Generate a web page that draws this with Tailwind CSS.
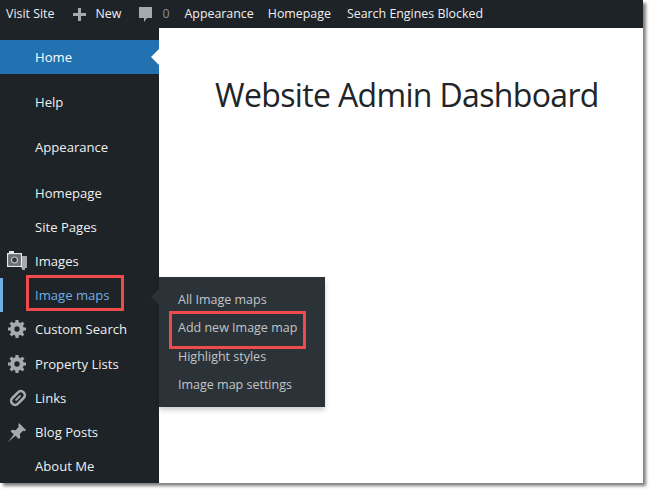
<!DOCTYPE html>
<html><head><meta charset="utf-8"><script src="https://cdn.jsdelivr.net/npm/@tailwindcss/browser@4"></script></head>
<body class="bg-white overflow-hidden font-['Open_Sans','Noto_Sans',sans-serif]">
<div class="relative w-[654px] h-[494px] overflow-hidden">
<div class="relative w-[643px] h-[483px] bg-white shadow-[3px_3px_3px_rgba(0,0,0,0.5)]">
<header class="h-[28px] bg-[#1d2327] text-[#f0f0f1] text-[12.400px] flex items-center">
<span class="ml-[6px]">Visit Site</span>
<svg class="ml-[18px] w-[15px] h-[15px]" viewBox="0 0 15 15" fill="#a7aaad"><path d="M6 1h3v5h5v3H9v5H6V9H1V6h5z"/></svg>
<span class="ml-[8px]">New</span>
<svg class="ml-[17px] w-[15px] h-[17px]" viewBox="0 0 15 17" fill="#a7aaad"><path d="M1 1h13v11H9l-3 4v-4H1z"/></svg>
<span class="ml-[9px] text-[#8c8f94]">0</span>
<span class="ml-[15px]">Appearance</span>
<span class="ml-[14px]">Homepage</span>
<span class="ml-[16px]">Search Engines Blocked</span>
</header>
<div class="flex h-[455px]">
<nav class="w-[159px] bg-[#1d2327] text-[#f0f0f1] text-[13.100px] pt-[12px]">
<div class="relative h-[34px] bg-[#2271b1] text-white pl-[35px] pt-[2px] flex items-center">Home<span class="absolute right-0 top-[9px] border-y-[8px] border-r-[8px] border-y-transparent border-r-white"></span></div>
<div class="h-[34px] mt-[11px] pl-[35px] pt-[2px] flex items-center">Help</div>
<div class="h-[34px] mt-[11px] pl-[35px] pt-[2px] flex items-center">Appearance</div>
<div class="h-[34px] mt-[12px] pl-[35px] pt-[2px] flex items-center">Homepage</div>
<div class="h-[34px] pl-[35px] pt-[2px] flex items-center">Site Pages</div>
<div class="relative h-[34px] pl-[35px] pt-[2px] flex items-center">
<svg class="absolute left-[6px] top-[7px] w-[22px] h-[21px]" viewBox="0 0 22 21"><path fill="#a7aaad" d="M16 5h5v12h-2v2h-3v-2h-1z"/><path fill="#e8e8e9" fill-rule="evenodd" d="M3 0h5v2h8v14H1V2h2zM2.500 3.500v11h12v-11z"/><rect x="2.500" y="3.500" width="12" height="11" fill="#6b6f73"/><circle cx="8.500" cy="9" r="3" fill="#33383c" stroke="#c3c4c7" stroke-width="1.200"/></svg>
Images</div>
<div class="relative h-[34px] border-l-[3px] border-[#72aee6] pl-[32px] pt-[2px] flex items-center text-[#72aee6]">Image maps</div>
<div class="relative h-[34px] pl-[35px] pt-[2px] flex items-center">
<svg class="absolute left-[8px] top-[8px] w-[18px] h-[18px]" viewBox="1 2 17 17" fill="#a7aaad"><path fill-rule="evenodd" d="M18 12h-2.180c-.17.7-.44 1.350-.81 1.930l1.540 1.540-2.100 2.100-1.540-1.540c-.58.360-1.230.640-1.910.810V19H8v-2.180c-.68-.170-1.330-.450-1.910-.810l-1.540 1.540-2.120-2.120 1.540-1.540c-.360-.580-.640-1.230-.810-1.910H1V9.030h2.170c.170-.700.440-1.350.810-1.930L2.430 5.550l2.100-2.100L6.080 5c.580-.370 1.230-.640 1.920-.820V2h3v2.180c.680.170 1.330.450 1.910.810l1.540-1.540 2.120 2.120-1.540 1.540c.360.580.640 1.230.810 1.910H18zM9.500 13a2.500 2.500 0 1 0 0-5 2.500 2.500 0 0 0 0 5z"/></svg>
Custom Search</div>
<div class="relative h-[34px] mt-[1px] pl-[35px] pt-[2px] flex items-center">
<svg class="absolute left-[8px] top-[8px] w-[18px] h-[18px]" viewBox="1 2 17 17" fill="#a7aaad"><path fill-rule="evenodd" d="M18 12h-2.180c-.17.7-.44 1.350-.81 1.930l1.540 1.540-2.100 2.100-1.540-1.540c-.58.360-1.230.640-1.910.810V19H8v-2.180c-.68-.170-1.330-.450-1.910-.810l-1.540 1.540-2.120-2.120 1.540-1.540c-.360-.580-.640-1.230-.810-1.910H1V9.030h2.170c.170-.700.440-1.350.810-1.930L2.430 5.550l2.100-2.100L6.080 5c.580-.370 1.230-.640 1.920-.820V2h3v2.180c.680.170 1.330.450 1.910.810l1.540-1.540 2.120 2.120-1.540 1.540c.360.580.640 1.230.810 1.910H18zM9.500 13a2.500 2.500 0 1 0 0-5 2.500 2.500 0 0 0 0 5z"/></svg>
Property Lists</div>
<div class="relative h-[34px] pl-[35px] pt-[2px] flex items-center">
<svg class="absolute left-[9px] top-[8px] w-[18px] h-[18px]" viewBox="0 0 18 18" fill="none" stroke="#a7aaad" stroke-width="2.600"><rect x="1" y="5" width="16" height="8" rx="4" transform="rotate(-45 9 9)"/><path d="M6.500 11.500l5-5" stroke-width="1.800"/></svg>
Links</div>
<div class="relative h-[34px] pl-[35px] pt-[2px] flex items-center">
<svg class="absolute left-[8px] top-[8px] w-[18px] h-[19px]" viewBox="0 0 18 19" fill="#a7aaad"><path d="M11 0l7 7-1.500 1.200-1.500-.4-3.200 3.200.5 3.500-1.500 1.500-3.300-3.300L0 19l5.800-7.500-3.300-3.300L4 6.700l3.500.5 3.200-3.200-.4-1.500z"/></svg>
Blog Posts</div>
<div class="h-[34px] pl-[35px] pt-[2px] flex items-center">About Me</div>
</nav>
<main class="flex-1 pl-[56px] pt-[42px]">
<h1 class="text-[32px] tracking-[-0.650px] leading-[50px] text-[#212529]">Website Admin Dashboard</h1>
</main>
</div>
<div class="absolute left-[159px] top-[277px] w-[166px] h-[130px] bg-[#2c3338] shadow-[0_3px_5px_rgba(0,0,0,0.2)] pt-[9px] pl-[19px] text-[12.500px] text-[#c3c4c7] font-medium">
<span class="absolute left-[-8px] top-[12px] border-y-[8px] border-r-[8px] border-y-transparent border-r-[#2c3338]"></span>
<div class="h-[28.500px] flex items-center">All Image maps</div>
<div class="h-[28.500px] flex items-center">Add new Image map</div>
<div class="h-[28.500px] flex items-center">Highlight styles</div>
<div class="h-[28.500px] flex items-center">Image map settings</div>
</div>
<div class="absolute left-[26px] top-[275px] w-[98px] h-[36px] border-[3px] border-[#f04b4b]"></div>
<div class="absolute left-[169px] top-[311px] w-[137px] h-[38px] border-[3px] border-[#f04b4b]"></div>
</div>
</div>
</body></html>
